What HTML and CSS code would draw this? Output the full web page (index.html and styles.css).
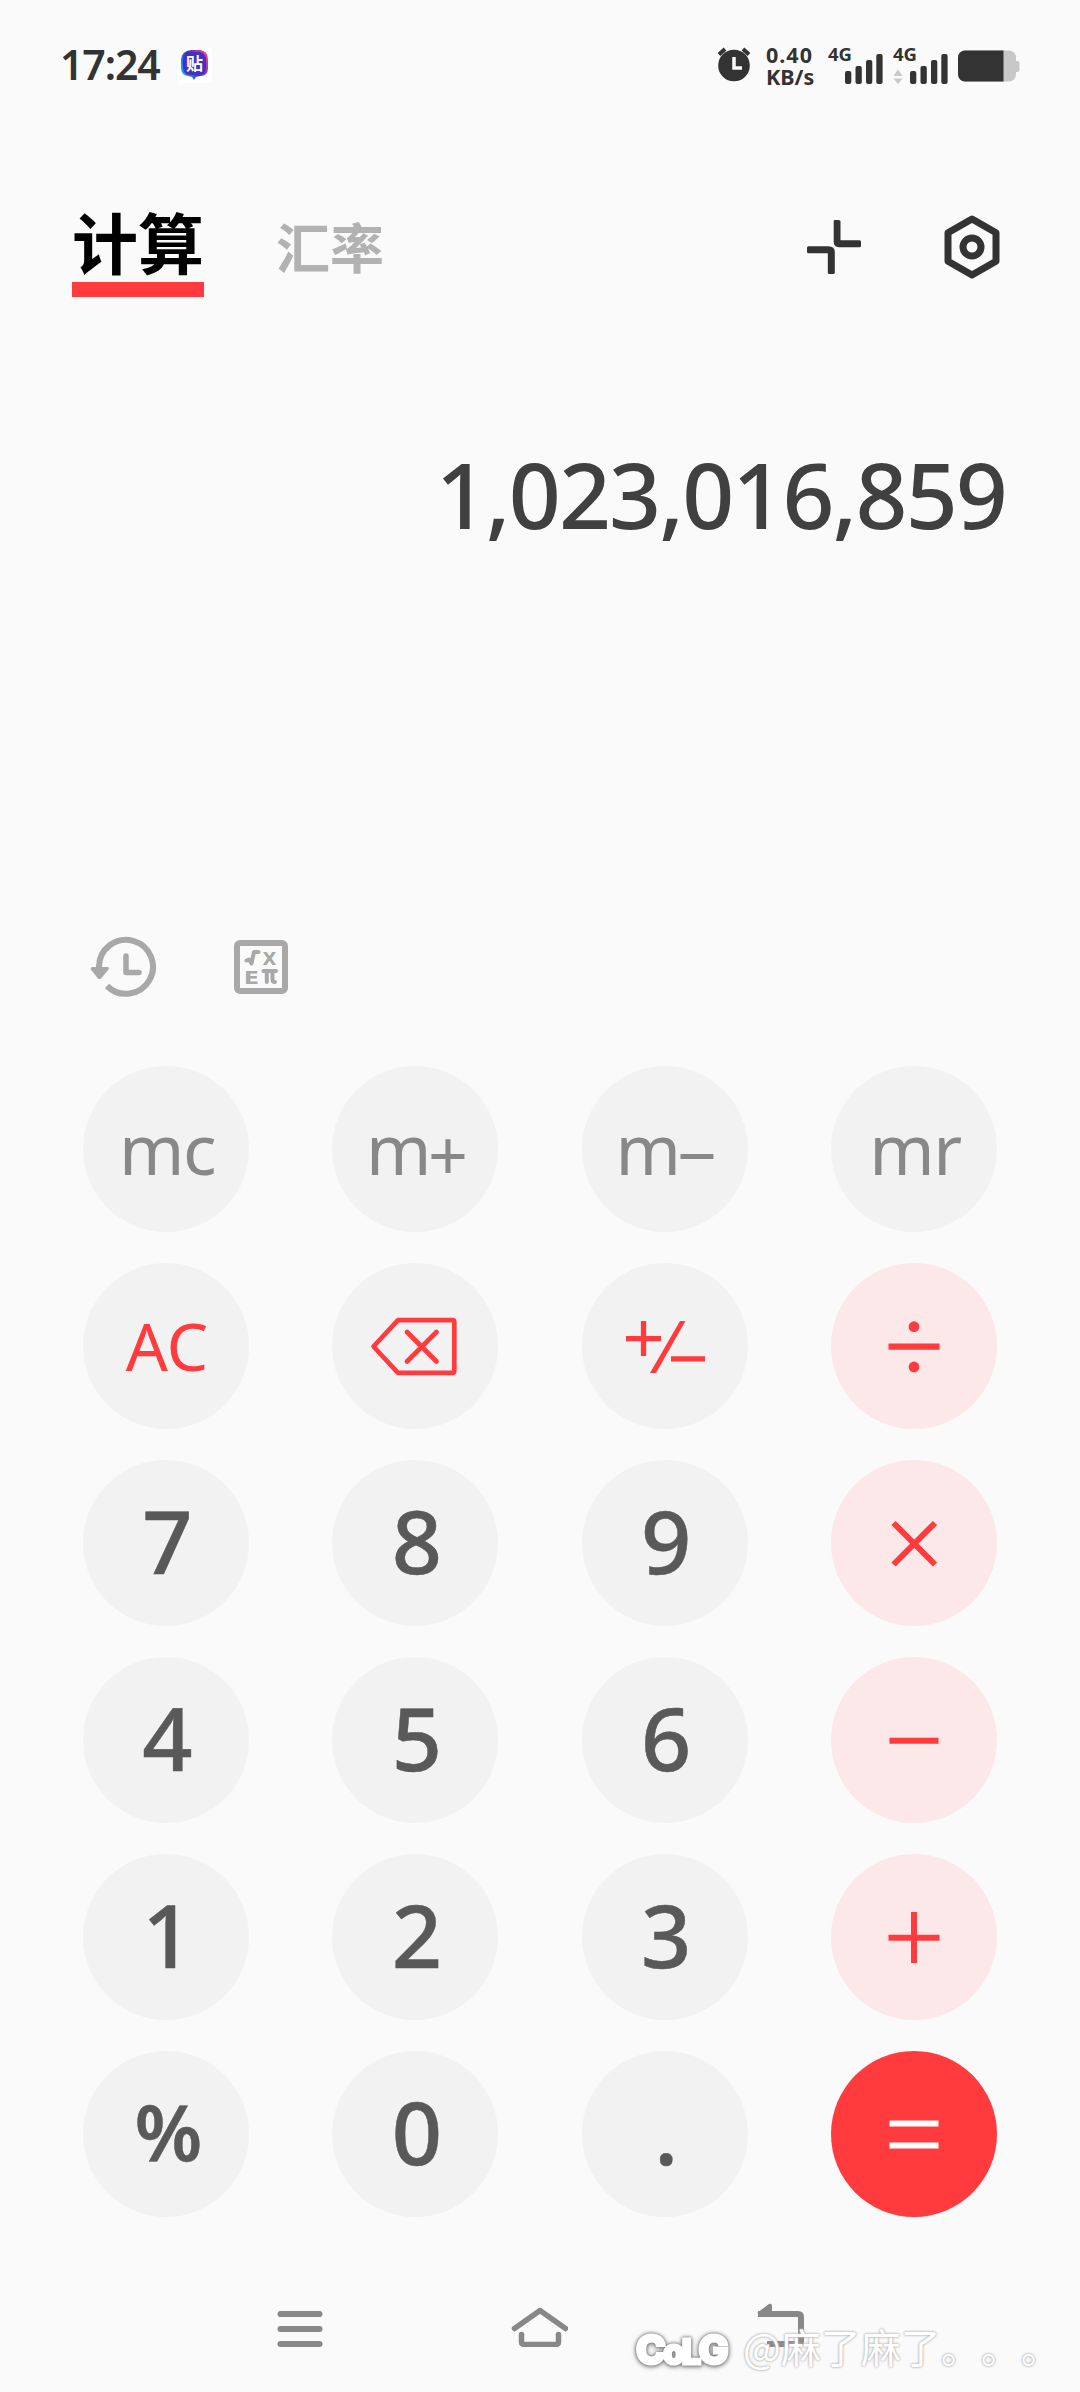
FILE: index.html
```html
<!DOCTYPE html>
<html lang="zh-CN">
<head>
<meta charset="utf-8">
<title>计算</title>
<link rel="stylesheet" href="styles.css">
</head>
<body>
<div class="screen">
  <header class="status">
    <span class="time">17:24</span>
    <svg class="app-badge" width="35" height="35" viewBox="0 0 35 35">
      <defs><linearGradient id="g" x1="0" y1=".8" x2="1" y2=".2"><stop offset="0" stop-color="#12b4ff"/><stop offset=".5" stop-color="#3a35d0"/><stop offset="1" stop-color="#ff3f80"/></linearGradient></defs>
      <rect width="35" height="35" rx="4" fill="#fff"/>
      <path d="M14 2h9q8 1 8 9v9q0 8-8 8l-4 1-2 3-2-3-4-1q-7-1-7-8v-9q1-8 10-9z" fill="url(#g)"/>
      <rect x="6" y="4" width="23" height="23" rx="7" fill="#4630c0"/>
      <text x="17.5" y="22" text-anchor="middle" class="badge-text">贴</text>
    </svg>
    <svg class="alarm" width="36" height="36" viewBox="0 0 36 36">
      <circle cx="17" cy="18.500" r="15.800" fill="#333"/>
      <path d="M2 7.500l6-5.500M32 7.500l-6-5.500" stroke="#333" stroke-width="4"/>
      <path d="M17 10v11h8" fill="none" stroke="#fafafa" stroke-width="3.500"/>
    </svg>
    <div class="speed"><span class="rate">0.40</span><span>KB/s</span></div>
    <div class="cell"><span>4G</span>
      <svg width="55" height="38" viewBox="0 0 55 38"><g fill="#333"><rect x="17" y="24" width="6.300" height="13" rx="2"/><rect x="27.500" y="19" width="6.300" height="18" rx="2"/><rect x="38" y="13" width="6.300" height="24" rx="2"/><rect x="48.300" y="7" width="6.300" height="30" rx="2"/></g></svg>
    </div>
    <div class="cell second"><span>4G</span>
      <svg width="55" height="38" viewBox="0 0 55 38"><g fill="#333"><rect x="17" y="24" width="6.300" height="13" rx="2"/><rect x="27.500" y="19" width="6.300" height="18" rx="2"/><rect x="38" y="13" width="6.300" height="24" rx="2"/><rect x="48.300" y="7" width="6.300" height="30" rx="2"/></g><path d="M.5 29L5 22.500 9.500 29zM.5 31.500h9L5 37z" fill="#c8c8c8"/></svg>
    </div>
    <svg class="battery" width="62" height="32" viewBox="0 0 62 32">
      <rect x="0" y=".5" width="58" height="31" rx="7" fill="#c8c8c8"/><rect x="56" y="11" width="5.500" height="11" rx="2" fill="#c8c8c8"/>
      <path d="M45.500.5H7a7 7 0 0 0-7 7v17a7 7 0 0 0 7 7h38.500z" fill="#333"/>
    </svg>
  </header>

  <nav class="tabs">
    <span class="tab active">计算</span>
    <span class="tab">汇率</span>
    <svg class="collapse" width="56" height="56" viewBox="0 0 56 56" fill="#333">
      <path d="M28.500 1h4q2 0 2 1.500v18.800H53.500q1.500 0 1.500 1.500v4q0 1.500-1.500 1.500H33q-5.300-.2-5.300-5.500V2.500Q27.700 1 28.500 1z"/>
      <path d="M2.500 27.300h20q6.300.2 6.300 5.500v20.700q0 1.500-1.500 1.500h-4q-1.500 0-1.500-1.500V34.300H2.500Q1 34.300 1 32.800v-4q0-1.500 1.500-1.500z"/>
    </svg>
    <svg class="hex" width="56" height="64" viewBox="0 0 56 64" fill="none" stroke="#333" stroke-linejoin="round">
      <path d="M28 4L52 17.800v28.400L28 60 4 46.200V17.800z" stroke-width="7"/><circle cx="28" cy="32" r="9" stroke-width="7"/>
    </svg>
  </nav>

  <output class="display">1,023,016,859</output>

  <div class="tools">
    <svg width="68" height="62" viewBox="0 0 68 62">
      <path d="M9 33V30.500A27 27 0 1 1 17 50" fill="none" stroke="#a8a8a8" stroke-width="6"/>
      <path d="M2 31h15.500q2 .5 1 2.500l-7.500 9q-1.500 1.200-3 0L.8 33.500Q.2 31.500 2 31z" fill="#a8a8a8"/>
      <path d="M36 20v16.500h13" fill="none" stroke="#a8a8a8" stroke-width="5.500" stroke-linecap="round" stroke-linejoin="round"/>
    </svg>
    <svg width="54" height="54" viewBox="0 0 54 54">
      <rect x="3" y="3" width="48" height="48" rx="3" fill="none" stroke="#a8a8a8" stroke-width="6"/>
      <g fill="none" stroke="#a8a8a8" stroke-width="4" stroke-linecap="round" stroke-linejoin="round"><path d="M12.500 20.500l2.500-1 2.500 4L20 12h4.500M29.500 31h12.500M32.800 31v11M38.500 31v9q0 2 2.500 2"/></g>
      <text x="28.500" y="25" class="fx">X</text><text x="10" y="43.800" class="fx" textLength="15" lengthAdjust="spacingAndGlyphs">E</text>
    </svg>
  </div>

  <main class="keys">
    <button class="key mem">mc</button><button class="key mem">m<span class="sign">+</span></button><button class="key mem">m<span class="sign">−</span></button><button class="key mem">mr</button>
    <button class="key ac">AC</button>
    <button class="key"><svg width="166" height="166" viewBox="0 0 166 166" fill="none" stroke="#ff3b3e" stroke-width="4.700" stroke-linejoin="round" stroke-linecap="round"><path d="M41.500 83.500L66 57.200h54.500q1.800 0 1.800 1.800v49q0 1.800-1.800 1.800H66z"/><path d="M75 69l29.500 29.500M104.500 69L75 98.500"/></svg></button>
    <button class="key"><svg width="166" height="166" viewBox="0 0 166 166" fill="none" stroke="#ff3b3e" stroke-width="5.300"><path d="M44 75.600h35M61.500 58v35M89 95.800h34"/><path d="M98 58h5.500L74 110h-6z" fill="#ff3b3e" stroke="none"/></svg></button>
    <button class="key op"><svg width="166" height="166" viewBox="0 0 166 166"><path d="M57.500 83.700h51" stroke="#ff3b3e" stroke-width="6.300"/><circle cx="83" cy="63.700" r="5.400" fill="#ff3b3e"/><circle cx="83" cy="104" r="5.400" fill="#ff3b3e"/></svg></button>
    <button class="key num">7</button><button class="key num">8</button><button class="key num">9</button>
    <button class="key op"><svg width="166" height="166" viewBox="0 0 166 166" stroke="#ff3b3e" stroke-width="6"><path d="M62.500 63l41.500 41.500M104 63l-41.500 41.500"/></svg></button>
    <button class="key num">4</button><button class="key num">5</button><button class="key num">6</button>
    <button class="key op"><svg width="166" height="166" viewBox="0 0 166 166" stroke="#ff3b3e" stroke-width="6"><path d="M58.500 83.700h49"/></svg></button>
    <button class="key num">1</button><button class="key num">2</button><button class="key num">3</button>
    <button class="key op"><svg width="166" height="166" viewBox="0 0 166 166" stroke="#ff3b3e" stroke-width="6"><path d="M57.500 83.700h51M83 58v51"/></svg></button>
    <button class="key num pct">%</button><button class="key num">0</button><button class="key num">.</button>
    <button class="key eq"><svg width="166" height="166" viewBox="0 0 166 166" stroke="#fff" stroke-width="6"><path d="M58.500 72.500h49M58.500 94.500h49"/></svg></button>
  </main>

  <footer class="navbar">
    <svg width="46" height="44" viewBox="0 0 46 44" stroke="#888" stroke-width="6" stroke-linecap="round"><path d="M3.500 11h39M3.500 26h39M3.500 41h39"/></svg>
    <svg width="58" height="44" viewBox="0 0 58 44" fill="none" stroke="#888" stroke-width="5.500" stroke-linecap="round" stroke-linejoin="round"><path d="M4.500 25.500L30 7.500l25.500 18M11.500 31.500v7q0 3 3 3h31q3 0 3-3v-7"/></svg>
    <svg width="50" height="44" viewBox="0 0 50 44" fill="none" stroke="#888" stroke-width="6" stroke-linejoin="round"><path d="M3 11h40q3 0 3 3v24q0 3-3 3H12"/><path d="M2 10L14 1q3-1 3 2v7z" fill="#888" stroke="none"/></svg>
  </footer>
  <div class="watermark"><span class="logo"><b>C</b><b class="small">o</b><b class="small">L</b><b>G</b></span><span class="user">@麻了麻了。。。</span></div>
</div>
</body>
</html>
```
FILE: styles.css
```css
* { box-sizing: border-box; }
body { margin: 0; background: #fafafa; font-family: "Noto Sans", "Noto Sans CJK SC", sans-serif; }
svg { display: block; flex: none; }
.screen { position: relative; width: 1080px; height: 2392px; overflow: hidden; display: flex; flex-direction: column; }

.status { height: 130px; padding: 0 60px; display: flex; align-items: flex-start; color: #333; flex: none; }
.time { width: 117px; margin-top: 37px; font-size: 41px; line-height: 54px; font-weight: 600; letter-spacing: -1.100px; }
.app-badge { margin-top: 48px; }
.badge-text { font: 700 17px "Noto Sans CJK SC", sans-serif; fill: #fff; }
.alarm { margin: 47px 0 0 505px; }
.speed { width: 63px; margin: 44px 0 0 12px; display: flex; flex-direction: column; font-size: 21.500px; line-height: 21.500px; font-weight: 700; padding-left: 1px; }
.rate { letter-spacing: 1px; }
.cell { width: 55px; height: 40px; margin: 47px 0 0 0; display: grid; }
.cell > * { grid-area: 1 / 1; }
.cell span { font-size: 18.500px; line-height: 14px; font-weight: 700; }
.second { margin-left: 10px; }
.battery { margin: 50px 0 0 10px; }

.tabs { height: 230px; padding: 76px 80px 0 72px; display: flex; align-items: flex-start; flex: none; }
.tab { font: 700 54px/60px "Noto Sans CJK SC", sans-serif; color: #b2b2b2; margin-top: 10px; width: 108px; }
.tab.active { width: 132px; height: 91px; margin: 0 72px 0 0; font-size: 66px; line-height: 68px; color: #000; border-bottom: 15px solid #ff3b3e; }
.collapse { margin: 13px 0 0 auto; }
.hex { margin: 9px 0 0 82px; }

.display { height: 574px; padding: 68px 74px 0 0; text-align: right; font-size: 91px; line-height: 132px; font-weight: 500; letter-spacing: -1.900px; color: #404040; flex: none; }

.tools { height: 132px; display: flex; gap: 76px; padding: 2px 0 0 90px; flex: none; }
.tools svg + svg { margin-top: 4px; }
.fx { font: 700 18px "DejaVu Sans", sans-serif; fill: #a8a8a8; }

.keys { display: grid; grid-template-columns: repeat(4, 166px); grid-auto-rows: 166px; justify-content: space-between; row-gap: 31px; padding: 0 83px; flex: none; }
.key { border: 0; border-radius: 50%; background: #f2f2f2; padding: 0; display: flex; align-items: center; justify-content: center; font-family: inherit; line-height: 1.362; }
.mem { font-size: 70px; color: #888; padding-left: 2px; letter-spacing: -1.500px; }
.sign { padding-top: 12px; margin-left: -2px; }
.ac { font-size: 66px; color: #ff3b3e; padding: 0 0 1px 2px; }
.num { font-size: 88px; font-weight: 500; color: #595959; padding: 0 0 4px 3px; -webkit-text-stroke: .5px #595959; }
.pct { font-size: 77px; font-weight: 600; letter-spacing: -2px; }
.op { background: #fce8e8; }
.eq { background: #ff3b3e; }

.navbar { display: flex; justify-content: space-between; padding: 86px 275px 0 277px; }
.watermark { position: absolute; left: 634px; top: 2316px; display: flex; align-items: center; color: #fff; }
.logo { display: flex; width: 104px; height: 64px; align-items: baseline; font: 800 40px/60px Inter, sans-serif; -webkit-text-stroke: 3px #fff; filter: drop-shadow(0 0 1.500px #777) drop-shadow(0 1px 2px #888); letter-spacing: -2.500px; padding: 4px 0 0 2px; }
.logo b { font-weight: 800; }
.logo .small { font-size: 34px; }
.user { margin-left: 5px; font: 400 40px/58px "Noto Sans CJK SC", sans-serif; text-spacing-trim: space-all; font-feature-settings: "chws" 0, "halt" 0; text-shadow: 0 0 2px #aaa, 0 0 3px #bbb; white-space: nowrap; padding-bottom: 4px; }
```
